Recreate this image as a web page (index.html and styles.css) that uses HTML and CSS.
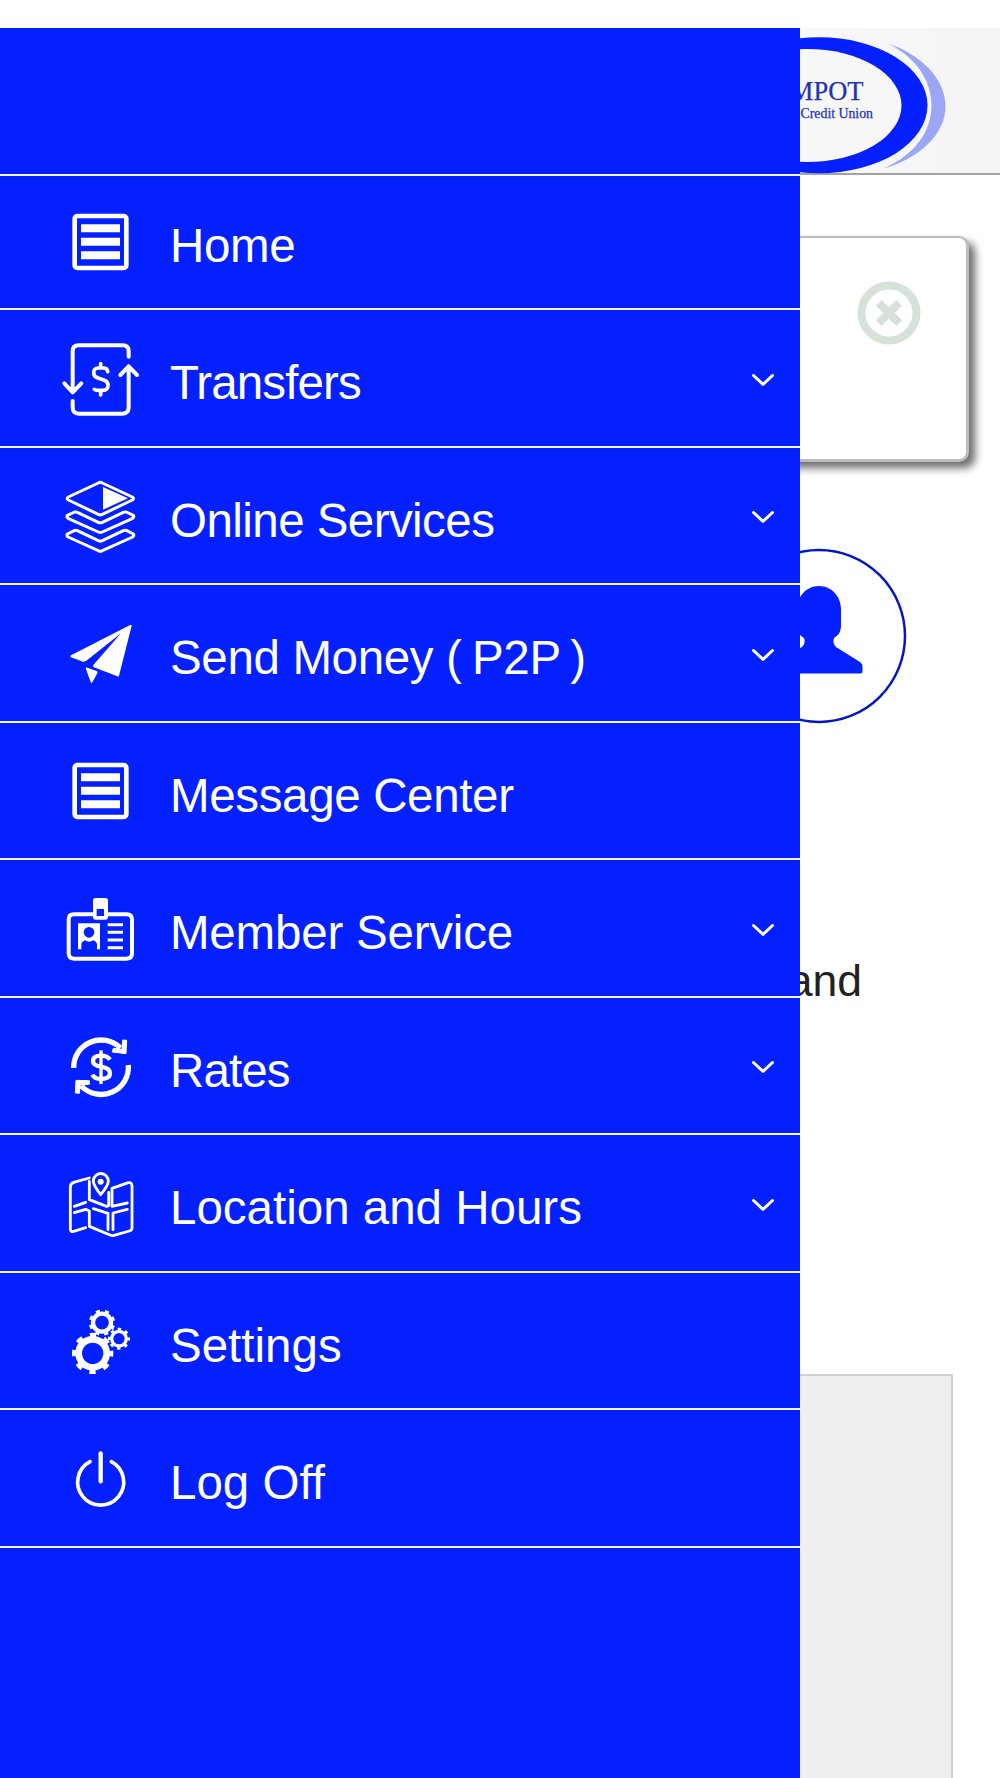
FILE: index.html
```html
<!DOCTYPE html>
<html lang="en">
<head>
<meta charset="utf-8">
<title>Credit Union Mobile</title>
<link rel="stylesheet" href="styles.css">
</head>
<body>
<svg class="defs" width="0" height="0">
  <symbol id="chevron" viewBox="0 0 24 16"><path d="M2.500 3.500L12 12.300L21.500 3.500" fill="none" stroke="#fff" stroke-width="3" stroke-linecap="round" stroke-linejoin="round"/></symbol>
  <symbol id="list" viewBox="60 66 240 240">
    <rect x="104" y="108" width="155" height="156" rx="8" fill="none" stroke="#fff" stroke-width="14"/>
    <path d="M123 145H240M123 185H240M123 226H240" stroke="#fff" stroke-width="24"/>
  </symbol>
</svg>
<div class="app">
  <main class="page">
    <header class="topbar">
      <svg class="logo" viewBox="780 28 160 146" width="160" height="146">
        <path d="M887.300 43.300C920 54 945.500 78 945.500 106.500C945.500 135 918 159 884 168.300C916 154 931 131 931.500 106C932 83 918 58 887.300 43.300Z" fill="#9ba7f6"/>
        <ellipse cx="819" cy="105.300" rx="108.500" ry="68" fill="#0420ff"/>
        <ellipse cx="807" cy="105.500" rx="94.500" ry="56.500" fill="#f7f7f8"/>
        <text class="logo-name" x="863.500" y="99.700" text-anchor="end">MPOT</text>
        <text class="logo-sub" x="873" y="118" text-anchor="end">Credit Union</text>
      </svg>
    </header>
    <section class="notice">
      <svg viewBox="0 0 64 64" width="64" height="64"><g fill="none" stroke="#d6e1d8" stroke-width="8"><circle cx="32" cy="32" r="27.500"/><path d="M21.800 21.800L42.200 42.200M42.200 21.800L21.800 42.200" stroke-width="8"/></g></svg>
    </section>
    <div class="profile">
      <svg viewBox="-88 -88 176 176" width="176" height="176">
        <circle r="86" fill="#fff" stroke="#0415c8" stroke-width="2.500"/>
        <path d="M0-50C13-50 22-39 22-27V-11C22-5 20-1 15 2C14 5 14 8 17 11L41 26C43 27.500 43.500 29 43.500 31V35Q43.500 37.500 41 37.500H-41Q-43.500 37.500-43.500 35V31C-43.500 29-43 27.500-41 26L-17 11C-14 8-14 5-15 2C-20-1-22-5-22-11V-27C-22-39-13-50 0-50Z" fill="#0420ff"/>
      </svg>
    </div>
    <p class="copy">and</p>
    <div class="panel"></div>
  </main>

  <nav class="drawer">
    <div class="drawer-head"></div>
    <ul class="menu">
      <li class="item"><svg class="icon"><use href="#list"/></svg><span class="label snug">Home</span></li>
      <li class="item">
        <svg class="icon" viewBox="60 475 240 240" fill="none" stroke="#fff" stroke-width="12" stroke-linecap="round" stroke-linejoin="round">
          <path d="M98 638V515Q98 497 116 497H248Q266 497 266 515V531M73 611L98 638L124 611M98 664V683Q98 702 116 702H248Q266 702 266 683V560M241 586L266 560L291 586"/>
          <path d="M203 576Q202 565 190 565H175Q161 565 161 580Q161 591 174 595L193 602Q204 606 204 617Q204 632 189 632H176Q163 632 163 629M182 552V564M182 633V646" stroke-width="11"/>
        </svg>
        <span class="label tightest">Transfers</span><svg class="chevron"><use href="#chevron"/></svg></li>
      <li class="item">
        <svg class="icon" viewBox="60 48 240 240" fill="none" stroke="#fff" stroke-width="9" stroke-linejoin="round">
          <path d="M175 69Q181 65 187 69L277 111Q284 115 277 120L187 163Q181 167 175 163L85 120Q78 115 85 111Z"/>
          <path d="M189 81L264 115L189 149Z" fill="#fff" stroke="none"/>
          <path d="M104 156L82 166Q79 171 84 175L175 216Q181 219 187 216L278 175Q283 171 280 166L259 156Q255 155 250 157L187 187Q181 190 175 187L112 157Q108 155 104 156Z"/>
          <path d="M104 211L82 222Q79 227 84 231L175 272Q181 276 187 272L278 231Q283 227 280 222L259 211Q255 210 250 212L187 242Q181 245 175 242L112 212Q108 210 104 211Z"/>
        </svg>
        <span class="label tight">Online Services</span><svg class="chevron"><use href="#chevron"/></svg></li>
      <li class="item">
        <svg class="icon" viewBox="60 460 240 240" fill="#fff">
          <path d="M272 495Q275 495 275 498L237 648Q236 652 232 650L160 622Q158 620 160 616L243 521L139 603Q134 606 129 606L93 593Q88 590 93 587Z"/>
          <path d="M137 626Q138 622 142 624L170 634Q174 636 172 641L157 668Q154 671 152 667Z"/>
        </svg>
        <span class="label snug">Send Money <span class="code">( P2P )</span></span><svg class="chevron"><use href="#chevron"/></svg></li>
      <li class="item"><svg class="icon"><use href="#list"/></svg><span class="label snug">Message Center</span></li>
      <li class="item">
        <svg class="icon" viewBox="60 445 240 240" fill="none" stroke="#fff">
          <path d="M159 524H102Q86 524 86 540V641Q86 657 102 657H260Q276 657 276 641V540Q276 524 260 524H204" stroke-width="12"/>
          <path d="M167 475H196Q204 475 204 483V531Q204 540 196 540H167Q159 540 159 531V483Q159 475 167 475ZM170 508V529H192V508Z" fill="#fff" fill-rule="evenodd" stroke="none"/>
          <path d="M114 551H180V629H171V612Q168 604 160 602Q147 610 135 602Q127 604 124 612V629H114ZM147 562A16 16 0 1 0 147 594A16 16 0 1 0 147 562Z" fill="#fff" fill-rule="evenodd" stroke="none"/>
          <path d="M203 555H249M203 578H249M203 601H249M203 624H249" stroke-width="9"/>
        </svg>
        <span class="label slight">Member Service</span><svg class="chevron"><use href="#chevron"/></svg></li>
      <li class="item">
        <svg class="icon" viewBox="60 48 240 240" fill="none" stroke="#fff" stroke-width="16">
          <path d="M101 174A82 82 0 0 1 241 114M265 165A82 82 0 0 1 124 228"/>
          <path d="M248 90L260 91L258 131L217 126L220 115L246 118ZM118 250L106 249L108 211L148 212L148 223L121 225Z" fill="#fff" stroke-width="3" stroke-linejoin="round"/>
          <path d="M210 149Q202 137 183 137Q159 137 159 153Q159 166 183 170Q210 174 210 190Q210 207 183 207Q163 207 157 194" stroke-width="13"/>
          <path d="M183 121V222" stroke-width="10"/>
        </svg>
        <span class="label tightest">Rates</span><svg class="chevron"><use href="#chevron"/></svg></li>
      <li class="item">
        <svg class="icon" viewBox="60 460 240 240" fill="none" stroke="#fff" stroke-width="8.500" stroke-linecap="round" stroke-linejoin="round">
          <path d="M148 505L101 518Q91 522 91 532V659Q92 667 101 665L137 654M148 515V570L200 590L206 588V548M216 588V536L265 519Q276 517 276 530V655Q276 662 268 664L222 677Q216 679 210 676L148 650V604L137 599L103 609M103 590L137 578M216 590L262 580M160 597L204 611V660M219 660V610L262 599"/>
          <path d="M182 555Q160 527 160 514A22 22 0 0 1 205 514Q205 527 182 555Z"/>
          <circle cx="182" cy="516" r="9" fill="#fff" stroke="none"/>
        </svg>
        <span class="label">Location and Hours</span><svg class="chevron"><use href="#chevron"/></svg></li>
      <li class="item">
        <svg class="icon" viewBox="60 33 240 240" fill="none" stroke="#fff">
          <circle cx="158" cy="190" r="42" stroke-width="20"/>
          <circle cx="158" cy="190" r="55" stroke-width="14" pathLength="80" stroke-dasharray="4.400 5.600" stroke-dashoffset="2.200"/>
          <circle cx="186" cy="98" r="27" stroke-width="13"/>
          <circle cx="186" cy="98" r="35" stroke-width="9" pathLength="80" stroke-dasharray="4.400 5.600" stroke-dashoffset="7"/>
          <circle cx="237" cy="146" r="22" stroke-width="10"/>
          <circle cx="237" cy="146" r="29" stroke-width="8" pathLength="80" stroke-dasharray="4.400 5.600" stroke-dashoffset="2"/>
        </svg>
        <span class="label">Settings</span></li>
      <li class="item">
        <svg class="icon" viewBox="60 445 240 240" fill="none" stroke="#fff" stroke-width="11" stroke-linecap="round">
          <path d="M150 516A69 69 0 1 0 214 516" />
          <path d="M182 491V575" stroke-width="13"/>
        </svg>
        <span class="label">Log Off</span></li>
    </ul>
  </nav>
</div>
</body>
</html>
```
FILE: styles.css
```css
* { box-sizing: border-box; }

body {
  margin: 0;
  background: #fff;
  font-family: "Liberation Sans", Arial, sans-serif;
}

.defs { display: block; }

.app {
  position: relative;
  height: 1778px;
  padding-top: 28px;
  overflow: hidden;
}

.page {
  display: flex;
  flex-direction: column;
  height: 100%;
}

.topbar {
  flex: none;
  display: flex;
  justify-content: flex-end;
  height: 147px;
  padding-right: 60px;
  background: linear-gradient(90deg, #f8f8f8 80%, #f4f4f4);
  border-bottom: 2px solid #a2a2a2;
}

.logo { display: block; overflow: visible; }

.logo-name,
.logo-sub {
  font-family: "Liberation Serif", "Times New Roman", serif;
  fill: #2231b4;
  stroke: #2231b4;
  stroke-width: 0.25px;
}

.logo-name { font-size: 26.5px; }
.logo-sub { font-size: 13.8px; }

.notice {
  flex: none;
  display: flex;
  justify-content: flex-end;
  height: 226px;
  margin: 61px 31px 0;
  padding: 43px 45px 0 0;
  background: #fff;
  border: 2px solid #bdbdbd;
  border-right-width: 3px;
  border-bottom-width: 3px;
  border-radius: 10px;
  box-shadow: 6px 6px 8px #6b6b6b;
}

.profile {
  flex: none;
  display: flex;
  justify-content: flex-end;
  height: 176px;
  margin-top: 86px;
  padding-right: 93px;
}

.copy {
  flex: none;
  margin: 227px 138px 0 0;
  font-size: 44.5px;
  line-height: 60px;
  text-align: right;
  color: #222;
}

.panel {
  flex: 1;
  margin: 363px 47px 0;
  background: #eee;
  border: 2px solid #d2d2d2;
  border-bottom: 0;
}

.drawer {
  position: absolute;
  top: 28px;
  bottom: 0;
  left: 0;
  width: 800px;
  background: #0420ff;
}

.drawer-head {
  height: 147.5px;
  border-bottom: 2px solid #f4f5ff;
}

.menu {
  margin: 0;
  padding: 0;
  list-style: none;
}

.item {
  display: flex;
  align-items: center;
  height: 137.5px;
  padding: 0 25px 0 60px;
  border-bottom: 2px solid #f4f5ff;
  color: #fff;
}

.icon {
  flex: none;
  width: 80px;
  height: 80px;
  margin-top: 1px;
}

.label {
  flex: 1;
  padding: 11px 0 0 30px;
  font-size: 47.5px;
  line-height: 56px;
  white-space: nowrap;
}

.item:first-child { height: 134.5px; }
.item:first-child .icon { margin-top: 0; }
.item:first-child .label { padding-top: 8px; }

.slight { letter-spacing: -0.2px; }
.snug { letter-spacing: -0.35px; }
.tight { letter-spacing: -0.55px; }
.tightest { letter-spacing: -0.9px; }
.code { word-spacing: -2.4px; }

.chevron {
  flex: none;
  width: 24px;
  height: 16px;
  margin-top: 4px;
}
```
